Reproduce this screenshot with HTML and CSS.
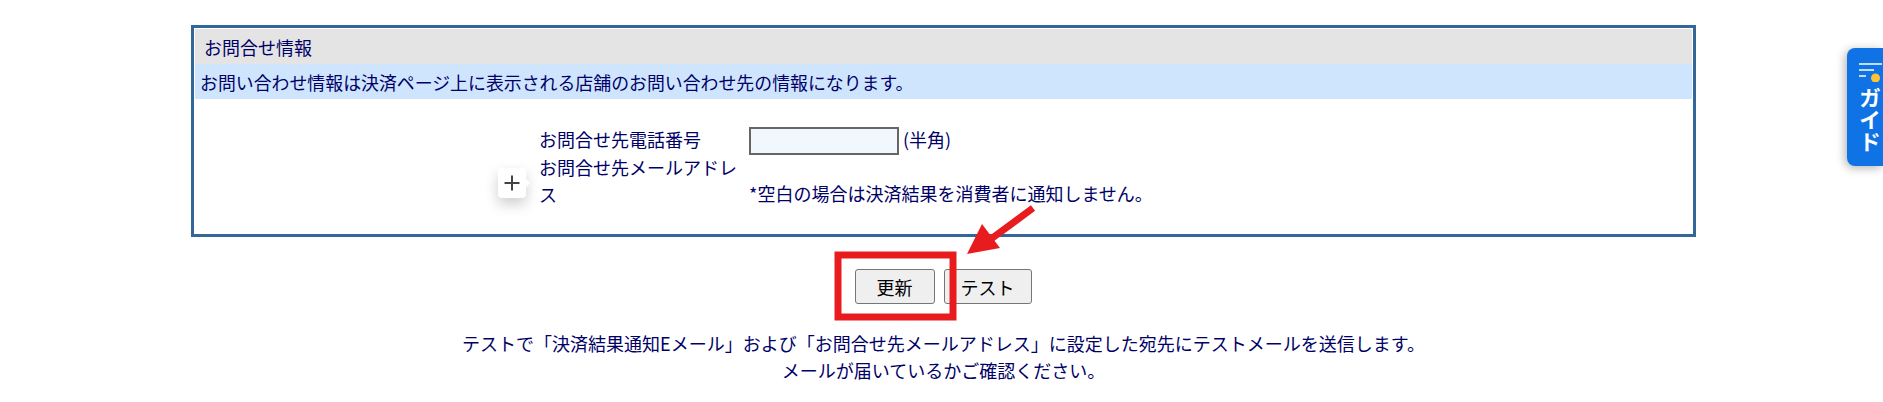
FILE: index.html
```html
<!DOCTYPE html>
<html lang="ja">
<head>
  <meta charset="UTF-8">
  <title>お問合せ情報</title>
  <link rel="stylesheet" href="styles.css">
</head>
<body>
  <div class="panel">
    <div class="panel-title">お問合せ情報</div>
    <div class="panel-note">お問い合わせ情報は決済ページ上に表示される店舗のお問い合わせ先の情報になります。</div>
    <div class="form-grid">
      <div class="form-label">お問合せ先電話番号</div>
      <div class="form-value"><input class="text-input" type="text"><span>(半角)</span></div>
      <div class="form-label">お問合せ先メールアドレス</div>
      <div class="form-value form-value-end">*空白の場合は決済結果を消費者に通知しません。</div>
    </div>
  </div>

  <div class="actions">
    <button class="btn btn-update">更新</button>
    <button class="btn btn-test">テスト</button>
  </div>

  <div class="foot-note">
    <p>テストで「決済結果通知Eメール」および「お問合せ先メールアドレス」に設定した宛先にテストメールを送信します。</p>
    <p>メールが届いているかご確認ください。</p>
  </div>

  <!-- overlays -->
  <div class="add-handle">
    <svg width="18" height="18" viewBox="0 0 18 18"><path d="M9 1.5v15M1.5 9h15" stroke="#444" stroke-width="2" fill="none"/></svg>
  </div>

  <svg class="annotation" width="1883" height="402" viewBox="0 0 1883 402">
    <rect x="838" y="255" width="115" height="62" fill="none" stroke="#e81c1f" stroke-width="7"/>
    <path d="M1033 208L991 239" stroke="#e81c1f" stroke-width="7" fill="none"/>
    <path d="M967 254L982 224L1000 248Z" fill="#e81c1f"/>
  </svg>

  <div class="guide-tab">
    <svg class="guide-icon" width="24" height="20" viewBox="0 0 24 20">
      <path d="M1 2h23M1 8h15M1 14h7" stroke="#fff" stroke-width="1.6" fill="none"/>
      <circle cx="17.500" cy="16" r="4.500" fill="#fdc336"/>
    </svg>
    <div class="guide-text">ガイド</div>
  </div>
</body>
</html>
```

FILE: styles.css
```css
* {
  box-sizing: border-box;
}

body {
  margin: 0;
  padding-top: 25px;
  height: 402px;
  overflow: hidden;
  background: #fff;
  color: #000066;
  font-family: "Noto Sans CJK JP", "Noto Sans", sans-serif;
  font-size: 18px;
  line-height: 27px;
}

.panel {
  width: 1505px;
  height: 212px;
  margin-left: 191px;
  padding: 1px;
  border: 3px solid #336699;
}

.panel-title {
  height: 35px;
  padding-left: 9px;
  background: #e4e4e4;
  line-height: 36px;
}

.panel-note {
  height: 35px;
  padding-left: 5px;
  background: #cfe5fe;
  font-size: 17.9px;
  line-height: 36px;
}

.form-grid {
  display: grid;
  grid-template-columns: 200px auto;
  grid-auto-rows: 28px;
  column-gap: 10px;
  justify-content: start;
  margin-left: 344px;
  padding-top: 26px;
}

.form-label {
  padding-top: 1px;
  line-height: 27px;
}

.form-value {
  display: flex;
  align-items: center;
  gap: 4px;
}

.form-value-end {
  grid-row: span 2;
  align-items: flex-end;
  padding-bottom: 2px;
}

.text-input {
  width: 150px;
  height: 28px;
  margin-top: 3px;
  border: 2px solid #666;
  background: #f0f7ff;
}

.actions {
  display: flex;
  justify-content: center;
  gap: 9px;
  margin-top: 32px;
  padding-left: 3px;
}

.btn {
  height: 35px;
  padding: 0;
  border: 1px solid #767676;
  border-radius: 3px;
  background: #efefef;
  color: #000;
  font-family: inherit;
  font-size: 18px;
}

.btn-update {
  width: 80px;
}

.btn-test {
  width: 88px;
}

.foot-note {
  margin-top: 26px;
  padding-left: 4px;
  text-align: center;
}

.foot-note p {
  margin: 0;
}

.add-handle {
  position: absolute;
  left: 498px;
  top: 168px;
  width: 28px;
  height: 30px;
  display: flex;
  align-items: center;
  justify-content: center;
  background: #fff;
  border-radius: 4px;
  box-shadow: 0 6px 14px rgba(0, 0, 0, 0.2);
}

.add-handle::after {
  content: "";
  position: absolute;
  right: -3px;
  top: 12px;
  width: 6px;
  height: 6px;
  background: #fff;
  transform: rotate(45deg);
}

.annotation {
  position: absolute;
  left: 0;
  top: 0;
  pointer-events: none;
}

.guide-tab {
  position: absolute;
  left: 1847px;
  top: 48px;
  width: 36px;
  height: 118px;
  padding: 14px 0 0 11px;
  background: #0f73e6;
  border-radius: 8px 0 0 8px;
  box-shadow: -2px 2px 10px rgba(0, 0, 0, 0.3);
}

.guide-icon {
  display: block;
}

.guide-text {
  width: 24px;
  margin-top: 5px;
  color: #fff;
  font-size: 22px;
  font-weight: 700;
  line-height: 24px;
  writing-mode: vertical-rl;
}
```
